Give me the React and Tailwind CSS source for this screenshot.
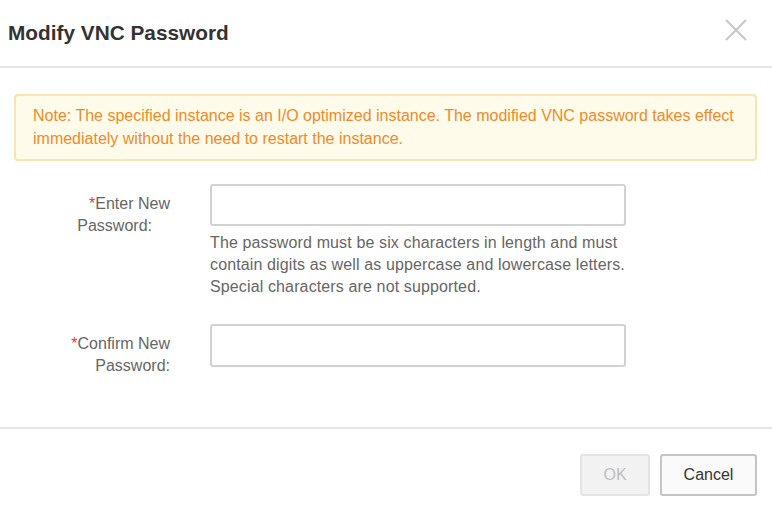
export default function App() {
  const font = { fontFamily: '"Liberation Sans", Arial, sans-serif' };
  return (
    <div className="w-[772px] h-[512px] bg-white overflow-hidden" style={font}>
      <div className="h-[66px] flex items-center justify-between pl-[8px] pr-[25px]">
        <div className="text-[20.8px] font-bold text-[#333]">Modify VNC Password</div>
        <svg width="22" height="22" viewBox="0 0 22 22" className="mt-[-6px]">
          <path d="M1 1 L21 21 M21 1 L1 21" stroke="#c8c8c8" strokeWidth="2.2" fill="none" />
        </svg>
      </div>
      <div className="h-[2px] bg-[#e6e6e6]" />
      <div className="ml-[14px] mr-[15px] mt-[26px] h-[67px] rounded-[4px] border-2 border-[#f8e5b0] bg-[#fffbea] pl-[17px] pr-[6px] pt-[8px] text-[16px] leading-[23px] text-[#ef8a2b]">
        Note: The specified instance is an I/O optimized instance. The modified VNC password takes effect immediately without the need to restart the instance.
      </div>
      <div className="flex mt-[23px]">
        <div className="w-[170px] shrink-0 text-right text-[16px] leading-[22px] text-[#666] pt-[9px]">
          <div><span className="text-[#e63c2e]">*</span>Enter New</div>
          <div className="mr-[18px]">Password:</div>
        </div>
        <div className="ml-[40px]">
          <div className="w-[416px] h-[42px] border-2 border-[#d2d2d2] rounded-[3px] bg-white" />
          <div className="mt-[6px] w-[422px] text-[16px] tracking-[0.13px] leading-[22px] text-[#666]">
            The password must be six characters in length and must contain digits as well as uppercase and lowercase letters. Special characters are not supported.
          </div>
        </div>
      </div>
      <div className="flex mt-[26px]">
        <div className="w-[170px] shrink-0 text-right text-[16px] leading-[22px] text-[#666] pt-[9px]">
          <div><span className="text-[#e63c2e]">*</span>Confirm New</div>
          <div>Password:</div>
        </div>
        <div className="ml-[40px]">
          <div className="w-[416px] h-[43px] border-2 border-[#d2d2d2] rounded-[3px] bg-white" />
        </div>
      </div>
      <div className="mt-[50px] h-[2px] bg-[#e8e8e8]" />
      <div className="flex justify-end gap-[10px] pr-[15px] mt-[25px]">
        <div className="w-[70px] h-[42px] flex items-center justify-center rounded-[3px] border-2 border-[#e4e4e4] bg-[#f2f2f2] text-[16px] text-[#bdbdbd]">OK</div>
        <div className="w-[97px] h-[42px] flex items-center justify-center rounded-[3px] border-2 border-[#c4c4c4] bg-[#fafafa] text-[16px] text-[#333]">Cancel</div>
      </div>
    </div>
  );
}
